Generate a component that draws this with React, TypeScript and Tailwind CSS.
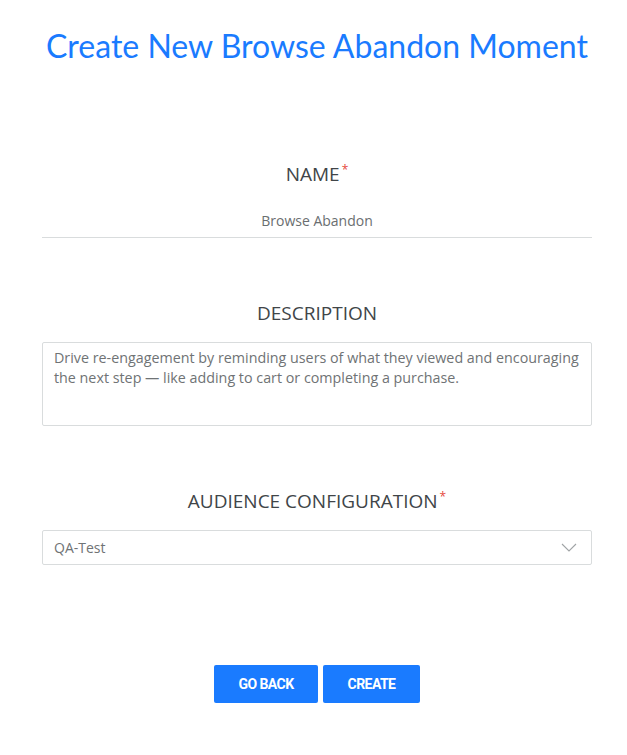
import React, { useState } from 'react';

const labelCls = "text-center text-[19px] text-[#404548] uppercase leading-none";

const Required = () => <span className="relative -top-[7px] ml-[2px] text-[12px] text-[#e5483d]">*</span>;

export default function App() {
  const [name, setName] = useState('Browse Abandon');
  const [desc, setDesc] = useState('Drive re-engagement by reminding users of what they viewed and encouraging the next step — like adding to cart or completing a purchase.');

  return (
    <div className="min-h-[755px] bg-white" style={{ fontFamily: '"Open Sans", sans-serif' }}>
      <div className="ml-[42px] w-[550px] pt-[28px]">
        <h1 className="text-center text-[32px] leading-[36px] text-[#1a7bff]" style={{ fontFamily: 'Lato, sans-serif' }}>
          Create New Browse Abandon Moment
        </h1>

        <div className="mt-[101px]">
          <div className={labelCls}>NAME<Required /></div>
          <input
            value={name}
            onChange={e => setName(e.target.value)}
            className="mt-[26px] block w-full border-b border-[#d9dcdd] pb-[6px] text-center text-[14px] text-[#6a6e70] outline-none"
          />
        </div>

        <div className="mt-[66px]">
          <div className={labelCls}>DESCRIPTION</div>
          <textarea
            value={desc}
            onChange={e => setDesc(e.target.value)}
            className="mt-[19px] block h-[84px] w-full resize-none rounded-[2px] border border-[#d9dcdd] px-[11px] py-[5px] text-[14.3px] leading-[20px] text-[#6f7375] outline-none"
          />
        </div>

        <div className="mt-[66px]">
          <div className={labelCls}>AUDIENCE CONFIGURATION<Required /></div>
          <div className="mt-[19px] flex h-[35px] items-center justify-between rounded-[2px] border border-[#d9dcdd] pl-[11px] pr-[14px]">
            <span className="text-[14px] text-[#6f7375]">QA-Test</span>
            <svg width="16" height="9" viewBox="0 0 16 9" fill="none" stroke="#a0a4a6" strokeWidth="1.1">
              <path d="M1 1l7 7 7-7" />
            </svg>
          </div>
        </div>

        <div className="mt-[100px] flex justify-center gap-[5px]" style={{ fontFamily: 'Roboto, sans-serif' }}>
          <button className="h-[38px] w-[104px] rounded-[2px] bg-[#1a7bff] text-[14px] font-bold tracking-[-0.04em] text-white">GO BACK</button>
          <button className="h-[38px] w-[97px] rounded-[2px] bg-[#1a7bff] text-[14px] font-bold tracking-[-0.04em] text-white">CREATE</button>
        </div>
      </div>
    </div>
  );
}
